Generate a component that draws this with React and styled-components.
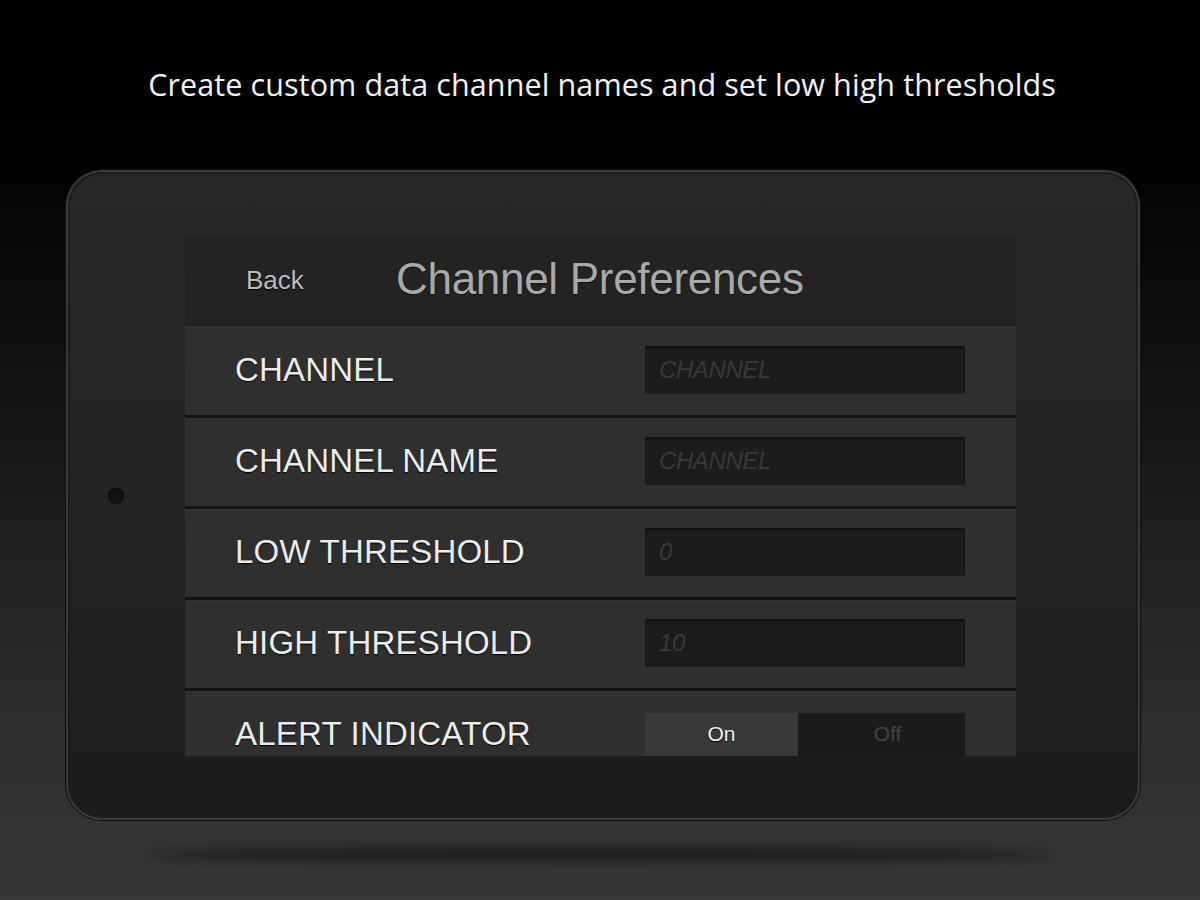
import React from "react";
import styled, { createGlobalStyle } from "styled-components";

const Global = createGlobalStyle`
  html, body { margin: 0; padding: 0; }
  body {
    width: 1200px;
    height: 900px;
    overflow: hidden;
    background: linear-gradient(to bottom, #000 0%, #020202 18%, #141414 45%, #262626 70%, #383838 100%);
    font-family: "Liberation Sans", Arial, sans-serif;
  }
`;

const Page = styled.div`
  width: 1200px;
  height: 900px;
  display: flex;
  flex-direction: column;
  align-items: flex-start;
`;

const Caption = styled.h1`
  align-self: center;
  margin: 63px 0 0 4px;
  font-family: "Open Sans", sans-serif;
  font-weight: 400;
  font-size: 30.5px;
  line-height: 42px;
  color: #f2f2f2;
  letter-spacing: 0.1px;
  white-space: nowrap;
`;

const Tablet = styled.div`
  box-sizing: border-box;
  margin: 65px 0 0 66px;
  width: 1074px;
  height: 650px;
  display: flex;
  align-items: center;
  padding: 64px 122px 62px 40px;
  border-radius: 36px;
  background: linear-gradient(to bottom, #282828 0%, #232323 50%, #1c1c1c 100%);
  border: 2px solid #3a3a3a;
  box-shadow: inset 0 0 0 2px #1c1c1c, 0 0 0 1px #0e0e0e;
`;

const Camera = styled.div`
  flex: none;
  width: 16px;
  height: 16px;
  margin-right: 61px;
  border-radius: 50%;
  background: #121212;
  box-shadow: inset 0 1px 2px #000;
`;

const Screen = styled.div`
  align-self: stretch;
  flex: 1;
  display: flex;
  flex-direction: column;
  overflow: hidden;
  background: #2f2f2f;
`;

const Header = styled.div`
  flex: none;
  height: 91px;
  display: flex;
  align-items: center;
  padding-bottom: 6px;
  background: #232323;
  border-bottom: 1px solid #2a2a2a;
  box-sizing: border-box;
`;

const BackButton = styled.span`
  margin-left: 61px;
  margin-top: 4px;
  width: 150px;
  font-size: 26px;
  color: #bdbdbd;
  text-shadow: 0 1px 1px #000;
`;

const HeaderTitle = styled.span`
  font-size: 44px;
  color: #a9a9a9;
  letter-spacing: -0.3px;
  margin-top: 2px;
  text-shadow: 0 1px 1px #111;
`;

const Row = styled.div`
  flex: none;
  box-sizing: border-box;
  height: 91px;
  display: flex;
  align-items: center;
  justify-content: space-between;
  padding: 0 51px 3px 50px;
  background: #2f2f2f;
  border-bottom: 3px solid #121212;
  box-shadow: inset 0 1px 0 #363636;
`;

const Label = styled.span`
  font-size: 33px;
  color: #ececec;
  text-shadow: 0 1px 1px #000;
  letter-spacing: 0.2px;
`;

const Field = styled.div`
  box-sizing: border-box;
  width: 320px;
  height: 48px;
  display: flex;
  align-items: center;
  padding-left: 14px;
  background: #1c1c1c;
  border-radius: 2px;
  box-shadow: inset 0 2px 2px #0f0f0f;
  font-size: 24px;
  font-style: italic;
  color: #393939;
  letter-spacing: -0.4px;
`;

const Toggle = styled.div`
  width: 320px;
  height: 48px;
  display: flex;
  margin-top: 6px;
  background: #1a1a1a;
`;

const Segment = styled.div`
  width: ${(p) => (p.$active ? "153px" : "167px")};
  display: flex;
  align-items: center;
  justify-content: center;
  padding-bottom: 6px;
  padding-left: ${(p) => (p.$active ? "0" : "12px")};
  box-sizing: border-box;
  font-size: 21px;
  background: ${(p) => (p.$active ? "#393939" : "#1b1b1b")};
  color: ${(p) => (p.$active ? "#f4f4f4" : "#444")};
  text-shadow: ${(p) => (p.$active ? "0 1px 1px #000" : "none")};
`;

const FloorShadow = styled.div`
  margin: 28px 0 0 140px;
  width: 920px;
  height: 14px;
  border-radius: 50%;
  background: rgba(0, 0, 0, 0.5);
  filter: blur(6px);
`;

const fields = [
  { label: "CHANNEL", value: "CHANNEL" },
  { label: "CHANNEL NAME", value: "CHANNEL" },
  { label: "LOW THRESHOLD", value: "0" },
  { label: "HIGH THRESHOLD", value: "10" },
];

export default function App() {
  return (
    <Page>
      <Global />
      <Caption>Create custom data channel names and set low high thresholds</Caption>
      <Tablet>
        <Camera />
        <Screen>
          <Header>
            <BackButton>Back</BackButton>
            <HeaderTitle>Channel Preferences</HeaderTitle>
          </Header>
          {fields.map((f) => (
            <Row key={f.label}>
              <Label>{f.label}</Label>
              <Field>{f.value}</Field>
            </Row>
          ))}
          <Row>
            <Label>ALERT INDICATOR</Label>
            <Toggle>
              <Segment $active>On</Segment>
              <Segment>Off</Segment>
            </Toggle>
          </Row>
        </Screen>
      </Tablet>
      <FloorShadow />
    </Page>
  );
}
